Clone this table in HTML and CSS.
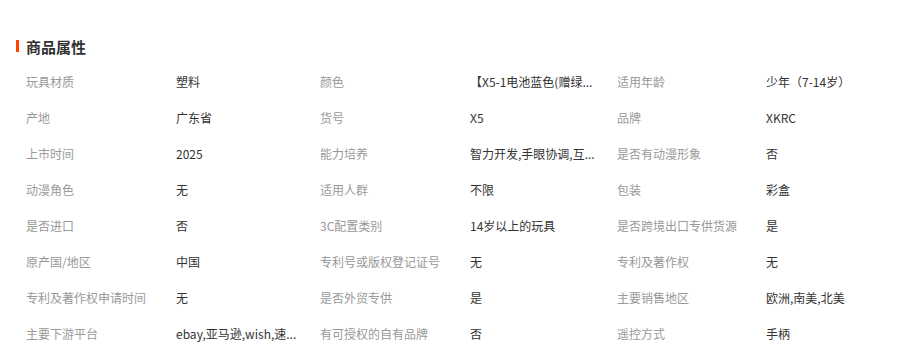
FILE: index.html
```html
<!DOCTYPE html>
<html lang="zh-CN">
<head>
<meta charset="utf-8">
<title>商品属性</title>
<link rel="stylesheet" href="styles.css">
</head>
<body>
<section class="attrs">
  <h2 class="attrs-title"><span class="bar"></span>商品属性</h2>
  <div class="grid">
    <div class="k">玩具材质</div><div class="v"><span>塑料</span></div>
    <div class="k">颜色</div><div class="v"><span>【X5-1电池蓝色(赠绿...</span></div>
    <div class="k">适用年龄</div><div class="v"><span>少年（7-14岁）</span></div>

    <div class="k">产地</div><div class="v"><span>广东省</span></div>
    <div class="k">货号</div><div class="v"><span>X5</span></div>
    <div class="k">品牌</div><div class="v"><span>XKRC</span></div>

    <div class="k">上市时间</div><div class="v"><span>2025</span></div>
    <div class="k">能力培养</div><div class="v"><span>智力开发,手眼协调,互...</span></div>
    <div class="k">是否有动漫形象</div><div class="v"><span>否</span></div>

    <div class="k">动漫角色</div><div class="v"><span>无</span></div>
    <div class="k">适用人群</div><div class="v"><span>不限</span></div>
    <div class="k">包装</div><div class="v"><span>彩盒</span></div>

    <div class="k">是否进口</div><div class="v"><span>否</span></div>
    <div class="k">3C配置类别</div><div class="v"><span>14岁以上的玩具</span></div>
    <div class="k">是否跨境出口专供货源</div><div class="v"><span>是</span></div>

    <div class="k">原产国/地区</div><div class="v"><span>中国</span></div>
    <div class="k">专利号或版权登记证号</div><div class="v"><span>无</span></div>
    <div class="k">专利及著作权</div><div class="v"><span>无</span></div>

    <div class="k">专利及著作权申请时间</div><div class="v"><span>无</span></div>
    <div class="k">是否外贸专供</div><div class="v"><span>是</span></div>
    <div class="k">主要销售地区</div><div class="v"><span>欧洲,南美,北美</span></div>

    <div class="k">主要下游平台</div><div class="v"><span>ebay,亚马逊,wish,速...</span></div>
    <div class="k">有可授权的自有品牌</div><div class="v"><span>否</span></div>
    <div class="k">遥控方式</div><div class="v"><span>手柄</span></div>
  </div>
</section>
</body>
</html>
```

FILE: styles.css
```css
html, body {
  margin: 0;
  padding: 0;
  background: #fff;
}
body {
  font-family: "Microsoft YaHei", "Noto Sans CJK SC", "Noto Sans", sans-serif;
  font-size: 12px;
  color: #333;
}
.attrs {
  padding: 28px 0 0 16px;
}
.attrs-title {
  display: flex;
  align-items: center;
  margin: 0;
  height: 36px;
  font-size: 15px;
  font-weight: bold;
  color: #333;
}
.bar {
  width: 3px;
  height: 12px;
  background: #ff4400;
  margin-right: 7px;
}
.grid {
  display: grid;
  grid-template-columns: 150px 144px 150px 147px 149px 1fr;
  grid-auto-rows: 36px;
  margin-left: 10px;
}
.k, .v {
  line-height: 36px;
  white-space: nowrap;
}
.k {
  color: #999;
}
.v span {
  display: inline-block;
  max-width: 140px;
  overflow: hidden;
  white-space: nowrap;
  vertical-align: top;
  color: #333;
}
```
